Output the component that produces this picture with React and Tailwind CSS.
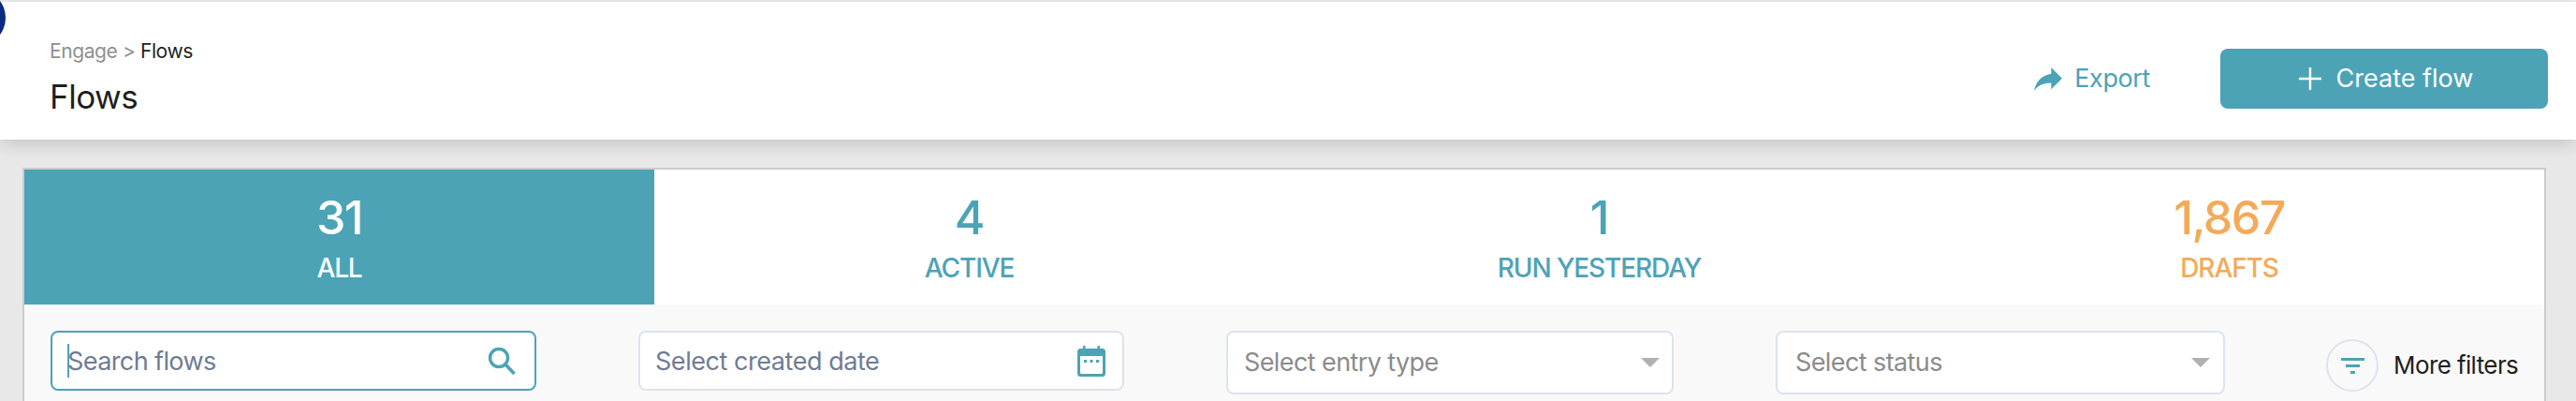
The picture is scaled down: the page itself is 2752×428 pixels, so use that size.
const font = { fontFamily: 'Inter, "Noto Sans", sans-serif' };

function Arrow() {
  return <span className="ml-auto h-0 w-0 border-x-[10px] border-t-[10px] border-x-transparent border-t-[#b0b0b0]" />;
}

function Tab({ n, label, tone, active }) {
  const base = active ? "bg-[#4ca3b6] text-white" : tone === "orange" ? "text-[#f4aa59]" : "text-[#4ca3b6]";
  return (
    <div className={`flex h-[144px] flex-col items-center ${base}`}>
      <div className="mt-[26px] text-[50px] font-medium leading-[50px] tracking-[-1.5px]">{n}</div>
      <div className="mt-[12px] text-[28px] font-medium leading-[34px] tracking-[-1.1px]">{label}</div>
    </div>
  );
}

export default function App() {
  return (
    <div style={font} className="relative h-[428px] w-[2752px] overflow-hidden bg-[#e8e8e8]">
      <div className="h-[2px] bg-[#eeeeee]" />
      <div className="absolute left-[-54px] top-[-11px] h-[60px] w-[60px] rounded-full bg-[#0b2a80]" />
      <header className="flex h-[147px] items-center justify-between bg-white pl-[53px] pr-[30px] pt-[17px] shadow-[0_4px_18px_rgba(0,0,0,0.17)]">
        <div className="-mt-[2px]">
          <div className="text-[21px] leading-[28px] tracking-[-0.4px] text-[#8f8f8f]">
            Engage &gt; <span className="text-[#1f1f1f]">Flows</span>
          </div>
          <h1 className="mt-[12px] text-[35px] font-normal leading-[44px] tracking-[-0.5px] text-[#1f1f1f]">Flows</h1>
        </div>
        <div className="flex items-center">
          <div className="flex items-center text-[#4ca3b6]">
            <svg width="30" height="25" viewBox="3 5 18 15" preserveAspectRatio="none" fill="currentColor">
              <path d="M14 9V5l7 7-7 7v-4.1c-5 0-8.5 1.6-11 5.1 1-5 4-10 11-11z" />
            </svg>
            <span className="ml-[13px] text-[27px] leading-[34px] tracking-[-0.4px]">Export</span>
          </div>
          <button className="ml-[75px] flex h-[64px] w-[350px] items-center justify-center rounded-[8px] bg-[#4ca3b6] pl-[4px] text-white">
            <svg width="24" height="24" viewBox="0 0 24 24" stroke="currentColor" strokeWidth="2.4">
              <path d="M12 0v24M0 12h24" />
            </svg>
            <span className="ml-[16px] text-[27px] leading-[34px] tracking-[0px]">Create flow</span>
          </button>
        </div>
      </header>

      <section className="ml-[24px] mt-[30px] w-[2696px] border-x-2 border-t-2 border-[#cccccc] bg-white">
        <div className="grid grid-cols-4">
          <Tab n="31" label="ALL" active />
          <Tab n="4" label="ACTIVE" />
          <Tab n="1" label="RUN YESTERDAY" />
          <Tab n="1,867" label="DRAFTS" tone="orange" />
        </div>
        <div className="flex h-[103px] items-start bg-[#f9f9f9] pl-[28px] pt-[28px]">
          <div className="relative flex h-[64px] w-[519px] items-center rounded-[8px] border-2 border-[#4ca3b6] bg-white pl-[16px] pr-[20px]">
            <span className="absolute left-[16px] top-[12px] h-[36px] w-[2px] bg-[#4ca3b6]" />
            <span className="translate-y-[1px] text-[27px] leading-[34px] tracking-[-0.6px] text-[#6f7c94]">Search flows</span>
            <svg className="ml-auto" width="30" height="30" viewBox="0 0 30 30" fill="none" stroke="#4ca3b6">
              <circle cx="12" cy="12" r="9.5" strokeWidth="3.4" />
              <path d="M19 19l9.5 10" strokeWidth="3.6" />
            </svg>
          </div>
          <div className="ml-[109px] flex h-[64px] w-[519px] items-center rounded-[8px] border-2 border-[#dde2ee] bg-white pl-[16px] pr-[18px]">
            <span className="translate-y-[1px] text-[27px] leading-[34px] tracking-[-0.45px] text-[#6f7c94]">Select created date</span>
            <svg className="ml-auto" width="30" height="33" viewBox="0 0 30 33" fill="#4ca3b6">
              <path fillRule="evenodd" d="M6 0h2.500v3h13V0H24v3h2.500A3.500 3.500 0 0 1 30 6.500V29.500a3.500 3.500 0 0 1-3.500 3.500h-23A3.500 3.500 0 0 1 0 29.500V6.500A3.500 3.500 0 0 1 3.500 3H6zM3 11v17.500c0 .8.7 1.500 1.500 1.500h21c.8 0 1.500-.7 1.500-1.500V11z" />
              <rect x="7" y="15" width="3" height="3" />
              <rect x="13.500" y="15" width="3" height="3" />
              <rect x="20" y="15" width="3" height="3" />
            </svg>
          </div>
          <div className="ml-[109px] flex h-[68px] w-[478px] items-center rounded-[8px] border-2 border-[#dde2ee] bg-white pl-[17px] pr-[13px]">
            <span className="text-[27px] leading-[34px] tracking-[-0.6px] text-[#8b8b8b]">Select entry type</span>
            <Arrow />
          </div>
          <div className="ml-[109px] flex h-[68px] w-[480px] items-center rounded-[8px] border-2 border-[#dde2ee] bg-white pl-[19px] pr-[14px]">
            <span className="text-[27px] leading-[34px] tracking-[-0.6px] text-[#8b8b8b]">Select status</span>
            <Arrow />
          </div>
          <div className="ml-[108px] mt-[9px] flex items-center">
            <div className="flex h-[56px] w-[56px] flex-col items-center justify-center gap-[4px] rounded-full border-2 border-[#dde2ee]">
              <span className="h-[3px] w-[25px] bg-[#4ca3b6]" />
              <span className="h-[3px] w-[15px] bg-[#4ca3b6]" />
              <span className="h-[3px] w-[5px] bg-[#4ca3b6]" />
            </div>
            <span className="ml-[16px] text-[26px] leading-[34px] tracking-[-0.6px] text-[#1f1f1f]">More filters</span>
          </div>
        </div>
      </section>
    </div>
  );
}
